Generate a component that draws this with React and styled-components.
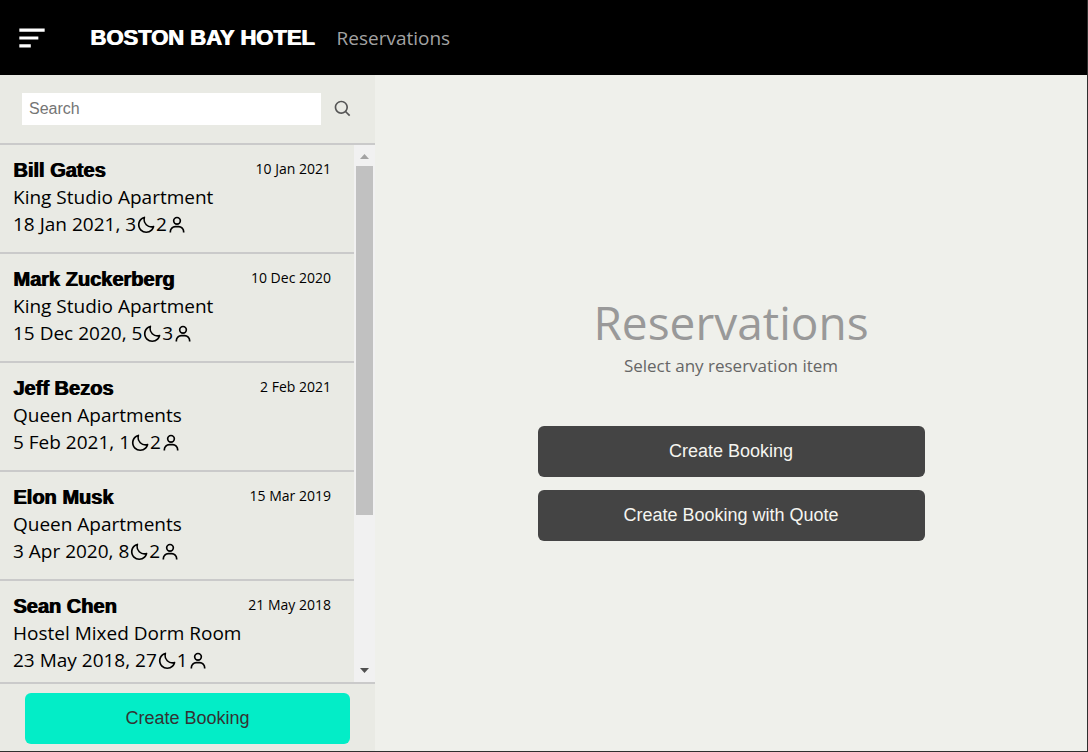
import React from "react";
import styled, { createGlobalStyle } from "styled-components";
import { BiMenuAltLeft, BiMoon, BiSearch, BiUser } from "react-icons/bi";

const GlobalStyle = createGlobalStyle`
  *, *::before, *::after { box-sizing: border-box; }
  body {
    margin: 0;
    background: #eff0eb;
    color: #000;
    font-family: "Segoe UI", "Open Sans", sans-serif;
  }
  button, input { font-family: "Liberation Sans", Arial, sans-serif; }
  h1, h2, p, ul { margin: 0; padding: 0; }
`;

const Page = styled.div`
  height: 100vh;
  display: flex;
  flex-direction: column;
  border-right: 1px solid #2f2f2f;
  border-bottom: 1px solid #2f2f2f;
`;

const TopBar = styled.header`
  flex: none;
  height: 75px;
  display: flex;
  align-items: center;
  padding: 0 13px;
  background: #000;
`;

const IconButton = styled.button`
  display: flex;
  padding: 0;
  border: 0;
  background: none;
  color: ${(p) => p.$color};
  cursor: pointer;
`;

const Brand = styled.h1`
  margin-left: 39px;
  font: 700 22px/30px "Liberation Sans", Arial, sans-serif;
  color: #fff;
  text-shadow: 1px 0 currentColor;
  white-space: nowrap;
`;

const Section = styled.span`
  margin-left: 22px;
  font-size: 19px;
  line-height: 30px;
  color: #a3a3a3;
`;

const Body = styled.div`
  flex: 1;
  min-height: 0;
  display: flex;
`;

const Sidebar = styled.aside`
  flex: none;
  width: 375px;
  display: flex;
  flex-direction: column;
  background: #e9eae4;
`;

const SearchForm = styled.form`
  display: flex;
  align-items: center;
  gap: 12px;
  padding: 18px 22px;
  border-bottom: 2px solid #cacaca;
`;

const SearchInput = styled.input`
  flex: 1;
  min-width: 0;
  height: 32px;
  padding: 0 7px;
  border: 0;
  background: #fff;
  font-size: 16px;
  &::placeholder { color: #757575; }
`;

const ListArea = styled.div`
  flex: 1;
  min-height: 0;
  display: flex;
`;

const List = styled.ul`
  flex: 1;
  overflow-y: auto;
  scrollbar-width: none;
  list-style: none;
`;

const Item = styled.li`
  display: flex;
  justify-content: space-between;
  padding: 12px 23px 14px 13px;
  border-bottom: 2px solid #cacaca;
  font-size: 19px;
  line-height: 27px;
`;

const Guest = styled.h2`
  font: 700 20px/27px "Liberation Sans", Arial, sans-serif;
  text-shadow: 1px 0 currentColor;
`;

const Stay = styled.p`
  display: flex;
  align-items: center;
`;

const Booked = styled.time`
  font-size: 14px;
  line-height: 24px;
`;

const ScrollTrack = styled.div`
  flex: none;
  width: 21px;
  display: flex;
  flex-direction: column;
  align-items: center;
  background: #f1f1f1;
`;

const ScrollArrow = styled.svg`
  flex: none;
  width: 21px;
  height: 21px;
  fill: ${(p) => p.$color};
`;

const ScrollRail = styled.div`
  flex: 1;
  width: 17px;
`;

const ScrollThumb = styled.div`
  height: 70.5%;
  background: #c1c1c1;
`;

const SidebarFooter = styled.div`
  padding: 9px 25px 7px;
  border-top: 2px solid #cacaca;
`;

const ActionButton = styled.button`
  display: block;
  width: 100%;
  height: 51px;
  border: 0;
  border-radius: 6px;
  background: ${(p) => (p.$primary ? "#03edc7" : "#444")};
  color: ${(p) => (p.$primary ? "#333" : "#f5f5f0")};
  font-size: 18px;
  cursor: pointer;
`;

const Main = styled.main`
  flex: 1;
  display: flex;
  flex-direction: column;
  align-items: center;
  justify-content: center;
  padding-top: 4px;
`;

const MainTitle = styled.h2`
  font-size: 46px;
  font-weight: 400;
  line-height: 64px;
  color: #999;
`;

const Hint = styled.p`
  font-size: 17px;
  line-height: 24px;
  color: #666;
`;

const Actions = styled.div`
  display: flex;
  flex-direction: column;
  gap: 13px;
  width: 387px;
  margin-top: 48px;
`;

const reservations = [
  { guest: "Bill Gates", room: "King Studio Apartment", from: "18 Jan 2021", nights: 3, people: 2, booked: "10 Jan 2021" },
  { guest: "Mark Zuckerberg", room: "King Studio Apartment", from: "15 Dec 2020", nights: 5, people: 3, booked: "10 Dec 2020" },
  { guest: "Jeff Bezos", room: "Queen Apartments", from: "5 Feb 2021", nights: 1, people: 2, booked: "2 Feb 2021" },
  { guest: "Elon Musk", room: "Queen Apartments", from: "3 Apr 2020", nights: 8, people: 2, booked: "15 Mar 2019" },
  { guest: "Sean Chen", room: "Hostel Mixed Dorm Room", from: "23 May 2018", nights: 27, people: 1, booked: "21 May 2018" },
];

export default function App() {
  return (
    <>
      <GlobalStyle />
      <Page>
        <TopBar>
          <IconButton type="button" aria-label="Menu" $color="#fff">
            <BiMenuAltLeft size={38} />
          </IconButton>
          <Brand>BOSTON BAY HOTEL</Brand>
          <Section>Reservations</Section>
        </TopBar>
        <Body>
          <Sidebar>
            <SearchForm role="search" onSubmit={(e) => e.preventDefault()}>
              <SearchInput type="search" aria-label="Search" placeholder="Search" />
              <IconButton type="submit" aria-label="Run search" $color="#555">
                <BiSearch size={20} />
              </IconButton>
            </SearchForm>
            <ListArea>
              <List>
                {reservations.map((r) => (
                  <Item key={r.guest}>
                    <div>
                      <Guest>{r.guest}</Guest>
                      <p>{r.room}</p>
                      <Stay>
                        {r.from}, {r.nights}
                        <BiMoon size={20} aria-label="nights" />
                        {r.people}
                        <BiUser size={20} aria-label="guests" />
                      </Stay>
                    </div>
                    <Booked>{r.booked}</Booked>
                  </Item>
                ))}
              </List>
              <ScrollTrack aria-hidden="true">
                <ScrollArrow viewBox="0 0 21 21" $color="#a3a3a3">
                  <path d="M6 14L10.500 9L15 14Z" />
                </ScrollArrow>
                <ScrollRail>
                  <ScrollThumb />
                </ScrollRail>
                <ScrollArrow viewBox="0 0 21 21" $color="#505050">
                  <path d="M6 7L10.500 12L15 7Z" />
                </ScrollArrow>
              </ScrollTrack>
            </ListArea>
            <SidebarFooter>
              <ActionButton type="button" $primary>Create Booking</ActionButton>
            </SidebarFooter>
          </Sidebar>
          <Main>
            <MainTitle>Reservations</MainTitle>
            <Hint>Select any reservation item</Hint>
            <Actions>
              <ActionButton type="button">Create Booking</ActionButton>
              <ActionButton type="button">Create Booking with Quote</ActionButton>
            </Actions>
          </Main>
        </Body>
      </Page>
    </>
  );
}
